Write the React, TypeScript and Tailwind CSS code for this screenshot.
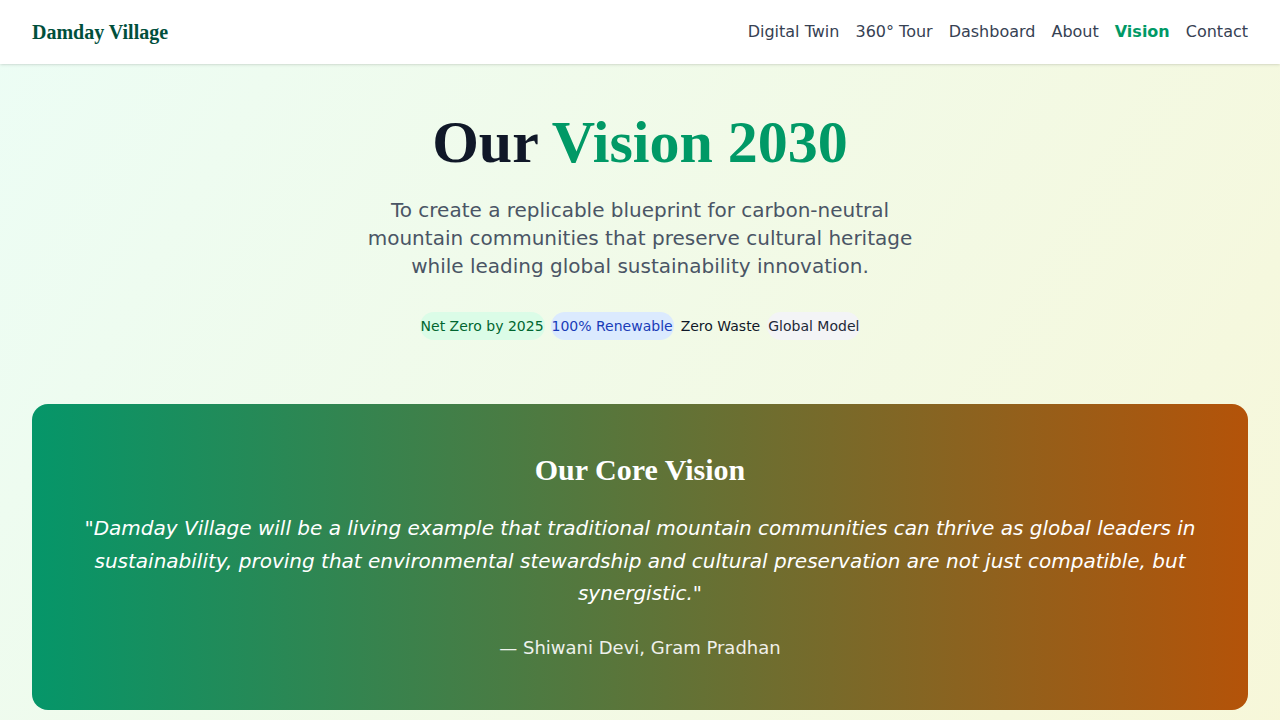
import React from 'react'

const links = ['Digital Twin', '360° Tour', 'Dashboard', 'About', 'Vision', 'Contact']

const badges = [
  { label: 'Net Zero by 2025', cls: 'bg-green-100 text-green-800' },
  { label: '100% Renewable', cls: 'bg-blue-100 text-blue-800' },
  { label: 'Zero Waste', cls: 'text-gray-900' },
  { label: 'Global Model', cls: 'bg-gray-100 text-gray-800' },
]

export default function App() {
  return (
    <div className="min-h-screen bg-[linear-gradient(121deg,#ecfdf5,#f7f7d9)] font-['DejaVu_Sans',sans-serif]">
      <nav className="h-16 bg-white shadow-sm flex items-center justify-between px-8">
        <div className="text-xl font-bold text-emerald-900 font-['Liberation_Serif',serif]">Damday Village</div>
        <div className="flex items-center gap-4 text-base text-gray-700">
          {links.map((l) => (
            <a key={l} className={l === 'Vision' ? 'font-bold text-emerald-600' : ''}>
              {l}
            </a>
          ))}
        </div>
      </nav>

      <section className="pt-12 pb-16 text-center">
        <h1 className="text-6xl leading-none font-bold font-['Liberation_Serif',serif] text-gray-900">
          Our <span className="text-emerald-600">Vision 2030</span>
        </h1>
        <p className="mt-6 max-w-xl mx-auto text-xl text-gray-600">
          To create a replicable blueprint for carbon-neutral mountain communities that preserve cultural heritage while leading global sustainability innovation.
        </p>
        <div className="mt-8 flex justify-center gap-1.5 text-sm">
          {badges.map((b) => (
            <span key={b.label} className={`rounded-full px-[1px] py-1 ${b.cls}`}>
              {b.label}
            </span>
          ))}
        </div>
      </section>

      <section className="px-8 pb-16">
        <div className="rounded-2xl bg-[linear-gradient(to_right,#059669,#b45309)] p-12 text-center text-white">
          <h2 className="text-3xl font-bold font-['Liberation_Serif',serif]">Our Core Vision</h2>
          <p className="mt-6 text-xl italic leading-relaxed">
            "Damday Village will be a living example that traditional mountain communities can thrive as global leaders in sustainability, proving that environmental stewardship and cultural preservation are not just compatible, but synergistic."
          </p>
          <p className="mt-6 text-lg opacity-90">— Shiwani Devi, Gram Pradhan</p>
        </div>
      </section>
    </div>
  )
}
